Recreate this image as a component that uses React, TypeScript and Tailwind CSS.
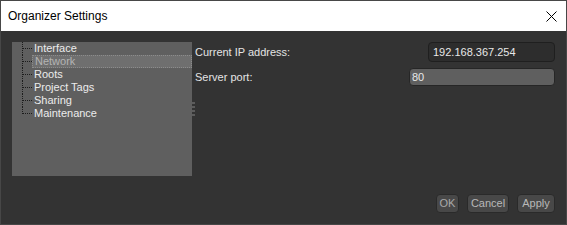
import React from 'react'

const items = ['Interface', 'Network', 'Roots', 'Project Tags', 'Sharing', 'Maintenance']

function TreeRow({ label, selected, last }: { label: string; selected?: boolean; last?: boolean }) {
  return (
    <div className="flex h-[13px] items-stretch">
      <div className="w-[10px] shrink-0" />
      <div className="relative w-[10px] shrink-0">
        <div className={`absolute left-0 top-0 border-l border-dotted border-[#1c1c1c] ${last ? 'h-[7px]' : 'h-[13px]'}`} />
        <div className="absolute left-[1px] top-[6px] w-[9px] border-t border-dotted border-[#1c1c1c]" />
      </div>
      <div
        className={`flex flex-1 items-center pl-[2px] leading-none ${
          selected ? 'border border-dotted border-[#8c8c8c] bg-[#6f6f6f] text-[#b4b4b4] pl-[1px]' : 'text-[#ececec]'
        }`}
      >
        {label}
      </div>
    </div>
  )
}

export default function App() {
  return (
    <div
      className="flex h-[225px] w-[567px] flex-col border border-[#474747] bg-[#333333] text-[11px]"
      style={{ fontFamily: '"Liberation Sans", Arial, sans-serif' }}
    >
      {/* barra de título */}
      <div className="flex h-[30px] shrink-0 items-center justify-between bg-white pl-[7px] pr-[9px]">
        <span className="text-[12px] text-black">Organizer Settings</span>
        <svg width="11" height="11" viewBox="0 0 11 11" className="text-black">
          <path d="M0.5 0.5 L10.5 10.5 M10.5 0.5 L0.5 10.5" stroke="currentColor" strokeWidth="1" />
        </svg>
      </div>

      <div className="flex flex-1 flex-col px-[11px] pb-[11px] pt-[11px]">
        <div className="flex">
          {/* árvore */}
          <div className="h-[134px] w-[180px] shrink-0 bg-[#5f5f5f]">
            {items.map((it, i) => (
              <TreeRow key={it} label={it} selected={it === 'Network'} last={i === items.length - 1} />
            ))}
          </div>

          {/* divisor */}
          <div className="flex w-[3px] shrink-0 flex-col items-center justify-center gap-[2px]">
            {[0, 1, 2, 3].map((i) => (
              <div key={i} className="h-[2px] w-[3px] bg-[#5c5c5c]" />
            ))}
          </div>

          {/* campos */}
          <div className="flex flex-1 flex-col gap-[6px] text-[#e4e4e4]">
            <div className="flex h-[20px] items-center justify-between">
              <span>Current IP address:</span>
              <div className="flex h-[20px] w-[127px] items-center rounded-[4px] border border-[#1f1f1f] bg-[#2d2d2d] pl-[4px] text-[#e8e8e8]">
                192.168.367.254
              </div>
            </div>
            <div className="flex h-[18px] items-center justify-between">
              <span>Server port:</span>
              <div className="flex h-[18px] w-[146px] items-center rounded-[4px] border border-[#262626] bg-[#5f5f5f] pl-[2px] text-[#e8e8e8]">
                80
              </div>
            </div>
          </div>
        </div>

        {/* botões */}
        <div className="mt-auto flex justify-end gap-[8px]">
          <button className="h-[19px] w-[23px] rounded-[4px] border border-[#2a2a2a] bg-[#484848] text-[11px] text-[#a8a8a8]">OK</button>
          <button className="h-[19px] w-[42px] rounded-[4px] border border-[#2a2a2a] bg-[#484848] text-[11px] text-[#b8b8b8]">Cancel</button>
          <button className="h-[19px] w-[38px] rounded-[4px] border border-[#2a2a2a] bg-[#484848] text-[11px] text-[#b8b8b8]">Apply</button>
        </div>
      </div>
    </div>
  )
}
